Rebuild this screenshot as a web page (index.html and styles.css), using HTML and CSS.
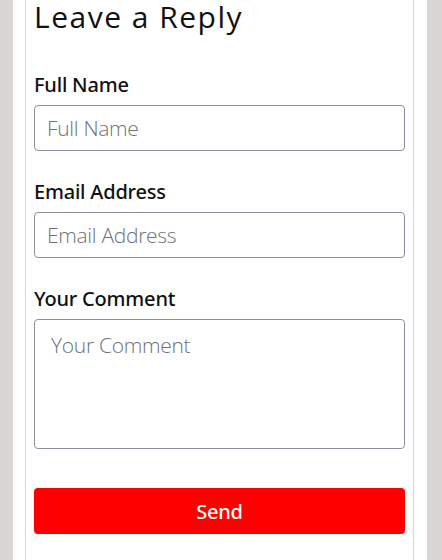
FILE: index.html
```html
<!DOCTYPE html>
<html lang="en">
<head>
<meta charset="utf-8">
<title>Leave a Reply</title>
<link rel="stylesheet" href="styles.css">
</head>
<body>
<div class="page">
  <div class="card">
    <h2 class="title">Leave a Reply</h2>
    <form class="form">
      <div class="field">
        <label class="label" for="name">Full Name</label>
        <input class="input" id="name" type="text" placeholder="Full Name">
      </div>
      <div class="field">
        <label class="label" for="email">Email Address</label>
        <input class="input" id="email" type="email" placeholder="Email Address">
      </div>
      <div class="field">
        <label class="label" for="comment">Your Comment</label>
        <textarea class="textarea" id="comment" placeholder="Your Comment"></textarea>
      </div>
      <button class="send" type="button">Send</button>
    </form>
  </div>
</div>
</body>
</html>
```

FILE: styles.css
```css
html, body {
  margin: 0;
  padding: 0;
}
body {
  background: #d9d5d4;
  font-family: "Open Sans", "Noto Sans", sans-serif;
  height: 560px;
  overflow: hidden;
}
.page {
  margin-left: 13px;
  width: 414px;
  height: 560px;
  background: #ffffff;
}
.card {
  margin-left: 12px;
  width: 389px;
  box-sizing: border-box;
  height: 560px;
  border-left: 1px solid #d5d5d5;
  border-right: 1px solid #d5d5d5;
  padding: 0 8px;
}
.title {
  margin: 0;
  font-size: 30px;
  line-height: 33px;
  font-weight: 400;
  letter-spacing: 1.5px;
  color: #111;
}
.form {
  display: flex;
  flex-direction: column;
  margin-top: 40px;
}
.field {
  display: flex;
  flex-direction: column;
  gap: 8px;
  margin-bottom: 29px;
}
.label {
  font-family: "Noto Sans", "Open Sans", sans-serif;
  font-size: 20px;
  line-height: 24px;
  font-weight: 500;
  letter-spacing: -0.2px;
  color: #111;
}
.input, .textarea {
  box-sizing: border-box;
  width: 100%;
  border: 1px solid #8f8da0;
  border-radius: 4px;
  font-family: "Open Sans", "Noto Sans", sans-serif;
  font-size: 21px;
  font-weight: 300;
  letter-spacing: -0.3px;
  color: #333;
  background: #fff;
  margin: 0;
  outline: none;
}
.input {
  height: 46px;
  padding: 0 12px;
}
.textarea {
  height: 130px;
  padding: 11px 16px;
  resize: none;
  display: block;
}
.input::placeholder,
.textarea::placeholder {
  color: #6e7279;
}
.send {
  margin-top: 10px;
  height: 46px;
  width: 100%;
  border: none;
  border-radius: 4px;
  background: #ff0000;
  color: #fff;
  font-family: "Noto Sans", "Open Sans", sans-serif;
  font-size: 20px;
  font-weight: 500;
  letter-spacing: -0.2px;
  padding: 0;
}
```
